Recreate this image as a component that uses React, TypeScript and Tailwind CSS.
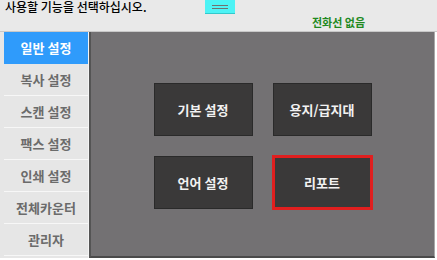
import React from "react";

const items = ["일반 설정", "복사 설정", "스캔 설정", "팩스 설정", "인쇄 설정", "전체카운터", "관리자"];

function Btn({ label, active }: { label: string; active?: boolean }) {
  return (
    <div
      className={
        "w-[99px] h-[53px] flex items-center justify-center bg-[#3a3939] text-[13px] font-bold text-[#f2f2f2] " +
        (active ? "border-2 border-[#e01f1f] shadow-[0_0_0_1px_#e01f1f]" : "border border-[#2a2a2a]")
      }
    >
      {label}
    </div>
  );
}

export default function App() {
  return (
    <div
      className="w-[437px] h-[260px] bg-white relative overflow-hidden"
      style={{ fontFamily: '"Noto Sans CJK KR", "Noto Sans", sans-serif' }}
    >
      <div className="h-[32px] bg-[#e9e9e9] border-b border-[#c8c8c8] relative">
        <div className="absolute left-[5px] top-0 text-[12px] font-medium text-black leading-[14px]">
          사용할 기능을 선택하십시오.
        </div>
        <div className="absolute left-[205px] top-0 w-[30px] h-[14px] bg-[#4df3f5] border-b border-[#33c9cc] flex flex-col items-center justify-center gap-[2px]">
          <div className="w-[16px] h-[1px] bg-[#707070]" />
          <div className="w-[16px] h-[1px] bg-[#707070]" />
        </div>
        <div className="absolute left-[312px] top-[14px] text-[11px] font-bold text-[#1f8a1f] leading-[16px]">
          전화선 없음
        </div>
      </div>
      <div className="flex h-[226px]">
        <div className="w-[89px] bg-[#e6e6e6] pl-[4px] flex flex-col border-r border-[#f4f4f4]">
          {items.map((t, i) => (
            <div
              key={t}
              className={
                "h-[32px] shrink-0 flex items-center justify-center text-[13px] font-bold border-b " +
                (i === 0
                  ? "bg-[#2f9bfb] text-white border-[#2f9bfb]"
                  : "bg-[#e6e6e6] text-[#6b6b6b] border-[#f7f7f7]")
              }
            >
              {t}
            </div>
          ))}
        </div>
        <div className="w-[346px] bg-[#737173] border-l-2 border-[#545454] border-r border-r-[#a8a8a8] border-b-2 border-b-[#4a4a4a] flex flex-col items-center justify-center gap-[20px] pt-[4px]">
          <div className="flex gap-[20px]">
            <Btn label="기본 설정" />
            <Btn label="용지/급지대" />
          </div>
          <div className="flex gap-[20px]">
            <Btn label="언어 설정" />
            <Btn label="리포트" active />
          </div>
        </div>
      </div>
    </div>
  );
}
